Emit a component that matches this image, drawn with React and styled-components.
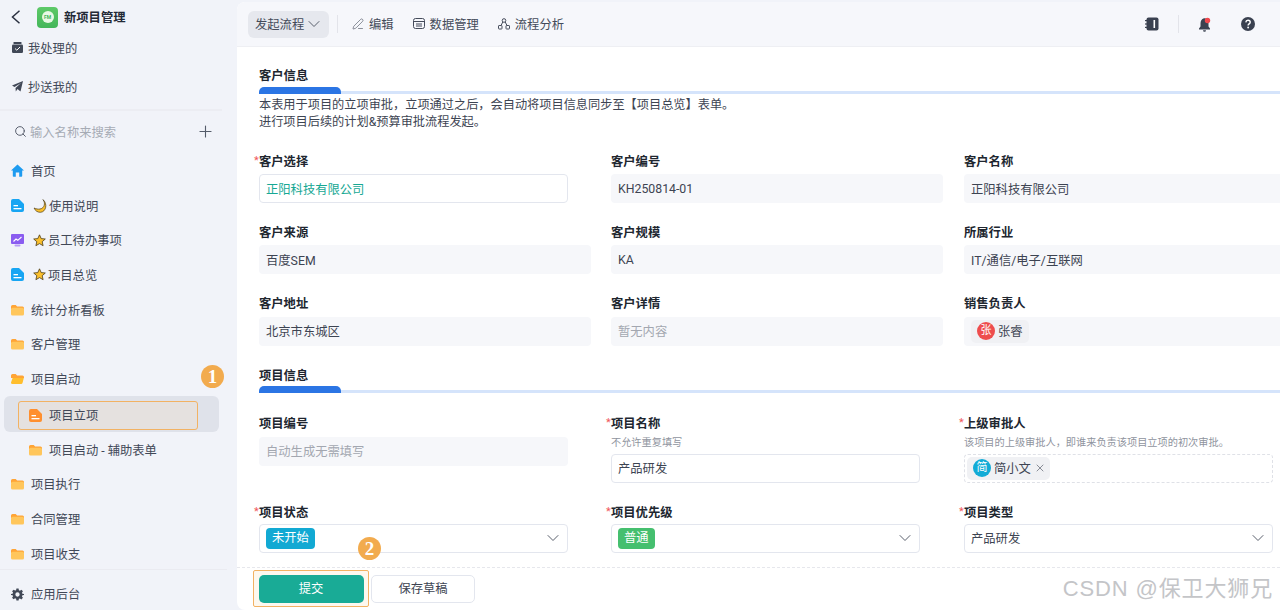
import React from 'react';
import styled, { createGlobalStyle } from 'styled-components';
import { ChevronDown, Search, Plus, PenLine, X } from 'lucide-react';

const GlobalStyle = createGlobalStyle`
  html, body {
    margin: 0;
    height: 100%;
    overflow: hidden;
  }
  body {
    font-family: Roboto, "Noto Sans CJK SC", sans-serif;
    font-size: 12.3px;
    color: #343c4c;
    background: #f1f3f9;
  }
  * {
    box-sizing: border-box;
  }
`;

const Page = styled.div`
  display: flex;
  width: 1280px;
  height: 610px;
  position: relative;
  overflow: hidden;
`;

/* sidebar */
const Sidebar = styled.aside`
  width: 237px;
  flex-shrink: 0;
  height: 100%;
  display: flex;
  flex-direction: column;
  background: #f1f3f9;
`;

const AppHeader = styled.div`
  height: 28px;
  flex-shrink: 0;
  display: flex;
  align-items: center;
  padding: 6px 0 0 11px;
`;

const Logo = styled.div`
  width: 21px;
  height: 21px;
  margin-left: 16px;
  border-radius: 4px;
  background: linear-gradient(180deg, #5dc968, #44b65a);
  display: flex;
  align-items: center;
  justify-content: center;
`;

const LogoDot = styled.div`
  width: 12px;
  height: 12px;
  border-radius: 50%;
  background: #e9f8e6;
  color: #3fb45a;
  font-size: 5px;
  font-weight: 700;
  line-height: 12px;
  text-align: center;
`;

const AppName = styled.div`
  margin-left: 6px;
  font-weight: 700;
  color: #232936;
`;

const QuickRow = styled.div`
  height: 39px;
  flex-shrink: 0;
  display: flex;
  align-items: center;
  gap: 5px;
  padding-left: 12px;
  color: #414857;
`;

const SideLine = styled.div`
  height: 2px;
  width: 222px;
  margin-top: 3px;
  background: #ecedf3;
  flex-shrink: 0;
`;

const SearchRow = styled.div`
  height: 41px;
  flex-shrink: 0;
  display: flex;
  align-items: center;
  padding: 0 22px 0 14px;
  color: #a6abb5;
  gap: 3px;
`;

const SearchText = styled.span`
  flex: 1;
`;

const Nav = styled.nav`
  flex: 1;
  overflow: hidden;
  min-height: 0;
  padding-top: 1.5px;
`;

const NavRow = styled.div`
  height: 34.7px;
  display: flex;
  align-items: center;
  gap: 7px;
  padding-left: ${(p) => (p.$sub ? 29 : 11)}px;
  color: #414857;
`;

const Emoji = styled.span`
  display: inline-flex;
  align-items: center;
  gap: 2px;
  margin-left: 2px;
`;

const SelectedRow = styled.div`
  height: 36px;
  margin-left: 4px;
  width: 215px;
  border-radius: 6px;
  background: #dfe2ea;
  padding: 4.5px 21px 2.5px 14px;
`;

const Highlight = styled.div`
  height: 100%;
  display: flex;
  align-items: center;
  gap: 7px;
  padding-left: 10px;
  border: 1.5px solid #f2b263;
  border-radius: 3px;
  background: #e5e1df;
  color: #414857;
`;

const SideFooter = styled.div`
  height: 41px;
  flex-shrink: 0;
  width: 227px;
  border-top: 1px solid #eaebf1;
  display: flex;
  align-items: center;
  gap: 7px;
  padding: 8px 0 0 11px;
  color: #414857;
`;

const StepBadge = styled.div`
  position: absolute;
  left: ${(p) => p.$x}px;
  top: ${(p) => p.$y}px;
  width: 23px;
  height: 23px;
  border-radius: 50%;
  background: #f2ab4e;
  color: #fff;
  font: 700 19px/23px "Liberation Serif", serif;
  text-align: center;
`;

/* main */
const Main = styled.main`
  flex: 1;
  min-width: 0;
  height: calc(100% - 2px);
  margin-top: 2px;
  background: #fff;
  border-radius: 8px 0 0 8px;
  display: flex;
  flex-direction: column;
  overflow: hidden;
`;

const Toolbar = styled.div`
  height: 45px;
  flex-shrink: 0;
  display: flex;
  align-items: center;
  padding: 0 25px 0 11px;
  background: #f6f7fb;
  border-bottom: 1px solid #eeeff3;
`;

const FlowButton = styled.div`
  width: 81px;
  height: 27px;
  border-radius: 6px;
  background: #e6e8ee;
  display: flex;
  align-items: center;
  padding-left: 7px;
  color: #444b5a;
`;

const ToolLine = styled.div`
  width: 1px;
  height: 18px;
  background: ${(p) => (p.$hidden ? 'transparent' : '#e3e4ea')};
  margin: ${(p) => p.$margin};
`;

const ToolItem = styled.div`
  display: flex;
  align-items: center;
  gap: 5px;
  margin-right: 19px;
  color: #444b5a;
`;

const ToolSpacer = styled.div`
  flex: 1;
`;

const Form = styled.div`
  flex: 1;
  min-height: 0;
  overflow: hidden;
  padding: 20px 0 0 22px;
`;

const SectionTitle = styled.div`
  height: 18px;
  margin-top: ${(p) => p.$top || 0}px;
  line-height: 18px;
  font-weight: 700;
  color: #20262f;
`;

const SectionBar = styled.div`
  position: relative;
  height: 7px;
  margin-top: ${(p) => p.$top}px;
  border-bottom: 3px solid #d5e4fb;
`;

const SectionBarFill = styled.div`
  position: absolute;
  left: 0;
  top: 0;
  width: 82px;
  height: 7px;
  background: #2b75e4;
  border-radius: 5px 5px 0 0;
`;

const Description = styled.div`
  margin-top: 3px;
  font-size: 12.2px;
  line-height: 17px;
  color: #3d4452;
`;

const FieldGrid = styled.div`
  display: grid;
  grid-template-columns: 352px 353px 353px;
  row-gap: 20.8px;
  margin-top: ${(p) => p.$top}px;
`;

const FieldLabel = styled.div`
  position: relative;
  height: 18px;
  line-height: 18px;
  font-weight: 700;
  color: #20262f;
  ${(p) =>
    p.$required &&
    `&::before {
      content: '*';
      position: absolute;
      left: -5px;
      top: -1px;
      color: #f0575a;
      font-weight: 400;
      font-size: 11px;
    }`}
`;

const Hint = styled.div`
  height: 17px;
  margin-top: 1px;
  line-height: 17px;
  font-size: 10.2px;
  color: #8f949e;
`;

const FieldBox = styled.div`
  height: 29px;
  width: ${(p) => (p.$wide ? 332 : 309)}px;
  margin-top: ${(p) => (p.$gap === undefined ? 3.5 : p.$gap)}px;
  display: flex;
  align-items: center;
  padding: 0 ${(p) => (p.$dashed ? 2 : p.$editable ? 6 : 7)}px;
  border-radius: 4px;
  background: ${(p) => (p.$editable || p.$dashed ? '#fff' : '#f6f7fa')};
  border: ${(p) => (p.$dashed ? '1px dashed #dfe1e7' : p.$editable ? '1px solid #e3e6ee' : '0')};
  color: ${(p) => (p.$muted ? '#a3a7b0' : p.$accent ? '#17a894' : '#3d4452')};
`;

const FieldValue = styled.span`
  flex: 1;
  display: flex;
  align-items: center;
`;

const SelectChevron = styled(ChevronDown)`
  margin-right: -2px;
  flex-shrink: 0;
  color: #5a606d;
`;

const FlowChevron = styled(ChevronDown)`
  color: #5a606d;
`;

const StatusTag = styled.span`
  display: inline-block;
  height: 21px;
  line-height: 21px;
  padding: 0 6px;
  border-radius: 4px;
  color: #fff;
  background: ${(p) => p.$color};
`;

const PersonChip = styled.span`
  height: 23px;
  display: inline-flex;
  align-items: center;
  gap: 3px;
  padding: 0 6px;
  border-radius: 5px;
  background: #f0f1f4;
  color: #3d4452;
`;

const Avatar = styled.span`
  width: 18px;
  height: 18px;
  border-radius: 50%;
  background: ${(p) => p.$color};
  color: #fff;
  font-size: 11px;
  line-height: 18px;
  text-align: center;
`;

const ChipClose = styled(X)`
  margin-right: -2px;
  color: #5a606d;
`;

const Footer = styled.div`
  height: 43px;
  flex-shrink: 0;
  border-top: 1px dashed #e6e7ec;
  display: flex;
  align-items: flex-start;
  padding: 2px 0 0 16px;
`;

const SubmitFrame = styled.div`
  width: 116px;
  height: 37px;
  padding: 3.5px 4.5px;
  border: 1.5px solid #f2b263;
  border-radius: 2px;
  background: #fdf8ef;
`;

const SubmitButton = styled.div`
  height: 100%;
  border-radius: 5px;
  background: #19ab96;
  color: #fff;
  text-align: center;
  line-height: 28px;
`;

const DraftButton = styled.div`
  width: 104px;
  height: 28px;
  margin: 5px 0 0 2px;
  border: 1px solid #e3e6ee;
  border-radius: 5px;
  background: #fff;
  color: #3d4452;
  text-align: center;
  line-height: 27px;
`;

const Watermark = styled.div`
  position: absolute;
  right: 7px;
  bottom: 6px;
  font-size: 22px;
  letter-spacing: 0.85px;
  line-height: 30px;
  font-family: "Liberation Sans", "Noto Sans CJK SC", sans-serif;
  color: #c4c5c8;
  white-space: nowrap;
`;

/* drawn icons */
const BackIcon = () => (
  <svg width="10" height="14" viewBox="0 0 10 14" fill="none" stroke="#2a3040" strokeWidth="1.5">
    <path d="M8.5 .8 1.500 7l7 6.200" />
  </svg>
);

const FolderIcon = ({ open }) => (
  <svg width="13" height="12" viewBox="0 0 13 12" style={{ flexShrink: 0 }}>
    <path d="M1.500 1h3.200l1.400 1.500h5.400A1.500 1.500 0 0 1 13 4v1H0V2.500A1.500 1.500 0 0 1 1.500 1z" fill="#ffa436" />
    {open ? (
      <path d="M1.600 5h11.200l-1.300 5a1.400 1.400 0 0 1-1.300 1H1.400A1.400 1.400 0 0 1 0 9.400z" fill="#ffbe2e" />
    ) : (
      <rect x="0" y="3.800" width="13" height="7.700" rx="1.500" fill="#ffc65c" />
    )}
  </svg>
);

const DocIcon = ({ color = '#17a5f3' }) => (
  <svg width="13" height="13" viewBox="0 0 13 13" style={{ flexShrink: 0 }}>
    <path d="M2 0h6l5 5v6a2 2 0 0 1-2 2H2a2 2 0 0 1-2-2V2a2 2 0 0 1 2-2z" fill={color} />
    <rect x="2.500" y="6" width="4.500" height="1.300" fill="#fff" />
    <rect x="2.500" y="9" width="8" height="1.300" fill="#fff" />
  </svg>
);

const HomeIcon = () => (
  <svg width="13" height="13" viewBox="0 0 13 13" style={{ flexShrink: 0 }}>
    <path d="M6.500 .5 13 6.500h-1.800V12a.8.8 0 0 1-.8.8H8.200V8.600H4.800v4.200H2.600a.8.8 0 0 1-.8-.8V6.500H0z" fill="#1e9bf0" />
  </svg>
);

const ChartIcon = () => (
  <svg width="13" height="13" viewBox="0 0 13 13" style={{ flexShrink: 0 }}>
    <rect x="0" y="0" width="13" height="10" rx="1" fill="#8a5cf0" />
    <rect x="3.500" y="10.500" width="6" height="2" rx="1" fill="#b79cf6" />
    <path d="M2.500 7.500 5 5l1.800 1.300L10.500 3" fill="none" stroke="#fff" strokeWidth="1.100" />
  </svg>
);

const StarIcon = () => (
  <svg width="13" height="13" viewBox="0 0 13 13">
    <path d="M6.500 .8 8.200 4.600l4.100.4-3.100 2.700.9 4-3.600-2.100-3.600 2.100.9-4L.7 5l4.100-.4z" fill="#fbc02d" stroke="#4a3b16" strokeWidth=".8" strokeLinejoin="round" />
  </svg>
);

const MoonIcon = () => (
  <svg width="14" height="14" viewBox="0 0 14 14">
    <path d="M10 .6c2.800 3.700 1.400 8.600-3 9.400-2 .4-4-.1-5.900-1 1 2.800 3.700 4.500 6.500 4.300C12.800 12.900 15 5 10 .6z" fill="#fbc02d" stroke="#4a3b16" strokeWidth=".7" />
  </svg>
);

const GearIcon = () => (
  <svg width="13" height="13" viewBox="0 0 24 24" style={{ flexShrink: 0 }}>
    <path
      fillRule="evenodd"
      d="M10 1h4l.6 3.200 1.900.8 2.700-1.800 2.800 2.800-1.800 2.700.8 1.900L24 11v2l-3 .6-.8 1.900 1.800 2.700-2.800 2.800-2.700-1.800-1.900.8L14 23h-4l-.6-3.200-1.900-.8-2.700 1.800L2 18l1.800-2.700-.8-1.900L0 13v-2l3-.6.8-1.900L2 5.800 4.800 3l2.700 1.800 1.900-.8zM12 8a4 4 0 1 0 0 8 4 4 0 0 0 0-8z"
      fill="#414857"
    />
  </svg>
);

const InboxIcon = () => (
  <svg width="11" height="11" viewBox="0 0 11 11" style={{ flexShrink: 0 }}>
    <rect x="1.500" y="0" width="8" height="2" rx=".6" fill="#414857" />
    <rect x="0" y="2.500" width="11" height="8.500" rx="1.200" fill="#414857" />
    <path d="M3 6.500l1.800 1.700L8 5" fill="none" stroke="#fff" strokeWidth="1" />
  </svg>
);

const SendIcon = () => (
  <svg width="11" height="11" viewBox="0 0 11 11" style={{ flexShrink: 0 }}>
    <path d="M11 0 8.500 10.500 5.500 8 3.800 10.500 3.500 7 9 2 2.500 6 0 4.500z" fill="#414857" />
  </svg>
);

const TableIcon = () => (
  <svg width="12" height="12" viewBox="0 0 12 12" fill="none" stroke="#444b5a" strokeWidth="1">
    <rect x=".5" y=".5" width="11" height="10" rx="2" />
    <path d="M.5 3.500h11M3 6h6M3 8h6" />
  </svg>
);

const BranchIcon = () => (
  <svg width="12" height="12" viewBox="0 0 12 12" fill="none" stroke="#444b5a" strokeWidth="1">
    <circle cx="6" cy="2.500" r="1.800" />
    <rect x=".5" y="7.500" width="3.500" height="3.500" rx=".6" />
    <rect x="8" y="7.500" width="3.500" height="3.500" rx=".6" />
    <path d="M4.800 4 3 7.500M7.200 4 9 7.500" />
  </svg>
);

const NotebookIcon = () => (
  <svg width="14" height="14" viewBox="0 0 14 14">
    <rect x="1.500" y="0.500" width="12" height="13" rx="2" fill="#3a4150" />
    <rect x="0" y="3" width="2.500" height="1.200" fill="#3a4150" />
    <rect x="0" y="6.400" width="2.500" height="1.200" fill="#3a4150" />
    <rect x="0" y="9.800" width="2.500" height="1.200" fill="#3a4150" />
    <rect x="8.500" y="3" width="1.600" height="8" fill="#fff" />
  </svg>
);

const BellIcon = () => (
  <svg width="14" height="15" viewBox="0 0 14 15">
    <path d="M6 1.200C3.500 2 2.500 4 2.500 6.500v3L1 11.500v1h11v-1l-1.500-2V6.500C10.500 3 8.500 1 6 1.200z" fill="#3a4150" />
    <path d="M5 13.200h3a1.500 1.500 0 0 1-3 0z" fill="#3a4150" />
    <circle cx="9.500" cy="3.500" r="2.700" fill="#f0484e" />
  </svg>
);

const HelpIcon = () => (
  <svg width="14" height="14" viewBox="0 0 14 14">
    <circle cx="7" cy="7" r="7" fill="#3a4150" />
    <path d="M4.800 5.300C5 3.900 5.900 3.300 7 3.300c1.300 0 2.200.8 2.200 1.900 0 1.700-2.100 1.700-2.100 3.300" fill="none" stroke="#fff" strokeWidth="1.400" />
    <circle cx="7.100" cy="10.500" r=".9" fill="#fff" />
  </svg>
);

const navBefore = [
  { name: '首页', icon: <HomeIcon /> },
  { name: '使用说明', icon: <DocIcon />, emoji: <MoonIcon /> },
  { name: '员工待办事项', icon: <ChartIcon />, emoji: <StarIcon /> },
  { name: '项目总览', icon: <DocIcon />, emoji: <StarIcon /> },
  { name: '统计分析看板', icon: <FolderIcon /> },
  { name: '客户管理', icon: <FolderIcon /> },
  { name: '项目启动', icon: <FolderIcon open /> },
];

const navAfter = ['项目执行', '合同管理', '项目收支'];

const customerFields = [
  { label: '客户选择', value: '正阳科技有限公司', required: true, editable: true, accent: true },
  { label: '客户编号', value: 'KH250814-01', wide: true },
  { label: '客户名称', value: '正阳科技有限公司', wide: true },
  { label: '客户来源', value: '百度SEM', wide: true },
  { label: '客户规模', value: 'KA', wide: true },
  { label: '所属行业', value: 'IT/通信/电子/互联网', wide: true },
  { label: '客户地址', value: '北京市东城区', wide: true },
  { label: '客户详情', value: '暂无内容', wide: true, muted: true },
];

function App() {
  return (
    <>
      <GlobalStyle />
      <Page>
        <Sidebar>
          <AppHeader>
            <BackIcon />
            <Logo>
              <LogoDot>FM</LogoDot>
            </Logo>
            <AppName>新项目管理</AppName>
          </AppHeader>
          <QuickRow>
            <InboxIcon />
            我处理的
          </QuickRow>
          <QuickRow>
            <SendIcon />
            抄送我的
          </QuickRow>
          <SideLine />
          <SearchRow>
            <Search size={13} color="#555c6a" strokeWidth={1.8} />
            <SearchText>输入名称来搜索</SearchText>
            <Plus size={19} color="#555c6a" strokeWidth={1.4} />
          </SearchRow>
          <Nav>
            {navBefore.map((item) => (
              <NavRow key={item.name}>
                {item.icon}
                {item.emoji ? (
                  <Emoji>
                    {item.emoji}
                    {item.name}
                  </Emoji>
                ) : (
                  item.name
                )}
              </NavRow>
            ))}
            <SelectedRow>
              <Highlight>
                <DocIcon color="#ff8f2e" />
                项目立项
              </Highlight>
            </SelectedRow>
            <NavRow $sub>
              <FolderIcon />
              项目启动 - 辅助表单
            </NavRow>
            {navAfter.map((name) => (
              <NavRow key={name}>
                <FolderIcon />
                {name}
              </NavRow>
            ))}
          </Nav>
          <SideFooter>
            <GearIcon />
            应用后台
          </SideFooter>
        </Sidebar>

        <Main>
          <Toolbar>
            <FlowButton>
              发起流程
              <FlowChevron size={20} strokeWidth={1.2} />
            </FlowButton>
            <ToolLine $margin="0 14px 0 8px" />
            <ToolItem>
              <PenLine size={12} strokeWidth={1.2} />
              编辑
            </ToolItem>
            <ToolItem>
              <TableIcon />
              数据管理
            </ToolItem>
            <ToolItem>
              <BranchIcon />
              流程分析
            </ToolItem>
            <ToolSpacer />
            <NotebookIcon />
            <ToolLine $margin="0 19px" />
            <BellIcon />
            <ToolLine $margin="0 14px" $hidden />
            <HelpIcon />
          </Toolbar>

          <Form>
            <SectionTitle>客户信息</SectionTitle>
            <SectionBar $top={2}>
              <SectionBarFill />
            </SectionBar>
            <Description>
              本表用于项目的立项审批，立项通过之后，会自动将项目信息同步至【项目总览】表单。
              <br />
              进行项目后续的计划&amp;预算审批流程发起。
            </Description>
            <FieldGrid $top={21.5}>
              {customerFields.map((f) => (
                <div key={f.label}>
                  <FieldLabel $required={f.required}>{f.label}</FieldLabel>
                  <FieldBox $wide={f.wide} $editable={f.editable} $accent={f.accent} $muted={f.muted}>
                    {f.value}
                  </FieldBox>
                </div>
              ))}
              <div>
                <FieldLabel>销售负责人</FieldLabel>
                <FieldBox $wide>
                  <PersonChip>
                    <Avatar $color="#ee4d4d">张</Avatar>
                    张睿
                  </PersonChip>
                </FieldBox>
              </div>
            </FieldGrid>

            <SectionTitle $top={21.4}>项目信息</SectionTitle>
            <SectionBar $top={1}>
              <SectionBarFill />
            </SectionBar>
            <FieldGrid $top={22.5}>
              <div>
                <FieldLabel>项目编号</FieldLabel>
                <FieldBox $muted>自动生成无需填写</FieldBox>
              </div>
              <div>
                <FieldLabel $required>项目名称</FieldLabel>
                <Hint>不允许重复填写</Hint>
                <FieldBox $editable $gap={2.5}>产品研发</FieldBox>
              </div>
              <div>
                <FieldLabel $required>上级审批人</FieldLabel>
                <Hint>该项目的上级审批人，即谁来负责该项目立项的初次审批。</Hint>
                <FieldBox $dashed $gap={2.5}>
                  <PersonChip>
                    <Avatar $color="#12abd6">简</Avatar>
                    简小文
                    <ChipClose size={12} strokeWidth={1.4} />
                  </PersonChip>
                </FieldBox>
              </div>
              <div>
                <FieldLabel $required>项目状态</FieldLabel>
                <FieldBox $editable $gap={2}>
                  <FieldValue>
                    <StatusTag $color="#12a9d3">未开始</StatusTag>
                  </FieldValue>
                  <SelectChevron size={20} strokeWidth={1.2} />
                </FieldBox>
              </div>
              <div>
                <FieldLabel $required>项目优先级</FieldLabel>
                <FieldBox $editable $gap={2}>
                  <FieldValue>
                    <StatusTag $color="#45bf6f">普通</StatusTag>
                  </FieldValue>
                  <SelectChevron size={20} strokeWidth={1.2} />
                </FieldBox>
              </div>
              <div>
                <FieldLabel $required>项目类型</FieldLabel>
                <FieldBox $editable $gap={2}>
                  <FieldValue>产品研发</FieldValue>
                  <SelectChevron size={20} strokeWidth={1.2} />
                </FieldBox>
              </div>
            </FieldGrid>
          </Form>

          <Footer>
            <SubmitFrame>
              <SubmitButton>提交</SubmitButton>
            </SubmitFrame>
            <DraftButton>保存草稿</DraftButton>
          </Footer>
        </Main>

        <StepBadge $x={201} $y={365}>1</StepBadge>
        <StepBadge $x={358} $y={537}>2</StepBadge>
        <Watermark>CSDN @保卫大狮兄</Watermark>
      </Page>
    </>
  );
}

export default App;
